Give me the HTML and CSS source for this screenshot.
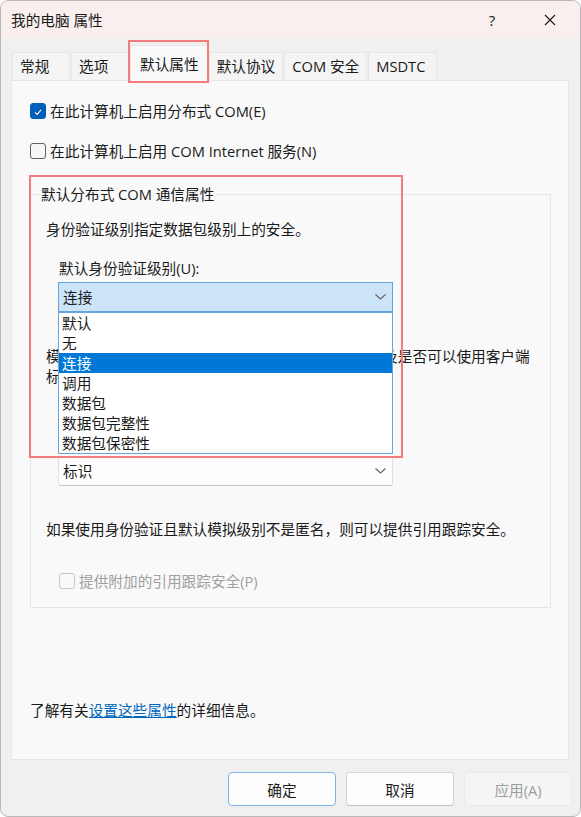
FILE: index.html
```html
<!DOCTYPE html>
<html lang="zh-CN">
  <head>
    <meta charset="UTF-8" />
    <title>我的电脑 属性</title>
    <link rel="stylesheet" href="styles.css">
  </head>
  <body>
    <div class="window">
      <div class="titlebar">
        <span class="title">我的电脑 属性</span>
        <span class="help">?</span>
        <span class="close">
          <svg width="12" height="12" viewBox="0 0 12 12"><path d="M1 1 L11 11 M11 1 L1 11" stroke="#1a1a1a" stroke-width="1.1" fill="none"/></svg>
        </span>
      </div>

      <!-- 选项卡 -->
      <div class="tabs">
        <div class="tab">常规</div>
        <div class="tab">选项</div>
        <div class="tab active">默认属性</div>
        <div class="tab">默认协议</div>
        <div class="tab">COM 安全</div>
        <div class="tab">MSDTC</div>
      </div>

      <div class="panel">
        <label class="check">
          <span class="box checked">
            <svg width="16" height="16" viewBox="0 0 16 16"><polyline points="4.5,8.5 7,10.8 11.5,5.5" stroke="#fff" stroke-width="1.3" fill="none"/></svg>
          </span>
          在此计算机上启用分布式 COM(E)
        </label>
        <label class="check">
          <span class="box"></span>
          在此计算机上启用 COM Internet 服务(N)
        </label>

        <fieldset class="group">
          <legend>默认分布式 COM 通信属性</legend>
          <div class="group-body">
            <p class="desc">身份验证级别指定数据包级别上的安全。</p>
            <div class="field">
              <div class="field-label">默认身份验证级别(U):</div>
              <div class="combo open">
                <span>连接</span>
                <svg width="11" height="6" viewBox="0 0 11 6"><polyline points="0.5,0.5 5.5,5 10.5,0.5" stroke="#5f5f5f" stroke-width="1.1" fill="none"/></svg>
                <!-- 展开的下拉列表 -->
                <ul class="droplist">
                  <li>默认</li>
                  <li>无</li>
                  <li class="selected">连接</li>
                  <li>调用</li>
                  <li>数据包</li>
                  <li>数据包完整性</li>
                  <li>数据包保密性</li>
                </ul>
              </div>
            </div>
            <p class="desc imp">模拟级别指定应用程序是否能够确定调用方身份，以及是否可以使用客户端标识执行操作。</p>
            <div class="field second">
              <div class="field-label">默认模拟级别(I):</div>
              <div class="combo">
                <span>标识</span>
                <svg width="11" height="6" viewBox="0 0 11 6"><polyline points="0.5,0.5 5.5,5 10.5,0.5" stroke="#5f5f5f" stroke-width="1.1" fill="none"/></svg>
              </div>
            </div>
            <p class="desc track">如果使用身份验证且默认模拟级别不是匿名，则可以提供引用跟踪安全。</p>
            <label class="check disabled">
              <span class="box"></span>
              提供附加的引用跟踪安全(P)
            </label>
          </div>
        </fieldset>

        <p class="more">了解有关<a href="#">设置这些属性</a>的详细信息。</p>
      </div>

      <div class="buttons">
        <button class="btn default">确定</button>
        <button class="btn">取消</button>
        <button class="btn" disabled>应用(A)</button>
      </div>

      <!-- 红色标注框 -->
      <div class="mark mark-tab"></div>
      <div class="mark mark-group"></div>
    </div>
  </body>
</html>
```

FILE: styles.css
```css
* {
  margin: 0;
  padding: 0;
  box-sizing: border-box;
}
body {
  background: #fff;
  font-family: "Open Sans", "Noto Sans CJK SC", sans-serif;
  font-size: 14.67px;
  color: #1a1a1a;
}
.window {
  position: relative;
  width: 581px;
  height: 817px;
  border: 1px solid #b9b9b9;
  border-radius: 8px;
  overflow: hidden;
  background: #f0f0f0;
  display: flex;
  flex-direction: column;
}
.titlebar {
  height: 37px;
  flex: none;
  background: #f8efee;
  display: flex;
  align-items: center;
  padding-left: 10px;
  line-height: 20px;
}
.title {
  flex: 1;
}
.help {
  width: 58px;
  text-align: center;
  font-size: 15px;
}
.close {
  width: 58px;
  height: 37px;
  display: flex;
  align-items: center;
  justify-content: center;
  margin-right: 1px;
}
/*
  选项卡
*/
.tabs {
  flex: none;
  height: 35px;
  margin-top: 7px;
  padding-left: 11px;
  display: flex;
  align-items: flex-end;
}
.tab {
  height: 28px;
  min-width: 58px;
  padding: 0 7px;
  line-height: 27px;
  background: #f4f4f4;
  border: 1px solid #e6e6e6;
  border-bottom: none;
  margin-right: 1px;
}
.tab.active {
  height: 36px;
  line-height: 36px;
  padding: 0 8px 0 9px;
  margin: 0 1px -1px 0;
  background: #f9f9f9;
  position: relative;
  z-index: 1;
}
.tab:last-child {
  padding-right: 11px;
}
.panel {
  flex: none;
  height: 680px;
  margin: 0 11px 0 10px;
  padding: 20px 17px 0 18px;
  background: #f9f9f9;
  border: 1px solid #e6e6e6;
}
/*
  复选框
*/
.check {
  display: flex;
  align-items: center;
  height: 20px;
  line-height: 20px;
  gap: 4px;
}
.check + .check {
  margin-top: 20px;
}
.box {
  width: 16px;
  height: 16px;
  border: 1px solid #616161;
  border-radius: 3px;
  background: #f6f6f6;
  display: flex;
}
.box.checked {
  border-color: #005fb8;
  background: #005fb8;
}
.check.disabled {
  color: #a0a0a0;
  margin-left: 13px;
  margin-top: 32px;
}
.check.disabled .box {
  border-color: #c8c8c8;
  background: #f9f9f9;
}
/*
  分组框
*/
.group {
  margin-top: 23px;
  border: 1px solid #e5e5e5;
  padding: 0;
  min-width: 0;
}
.group legend {
  margin-left: 8px;
  padding: 0 2px;
  line-height: 20px;
}
.group-body {
  padding: 15px 0 16px 15px;
}
.desc {
  line-height: 20px;
}
.field {
  margin-top: 19px;
  margin-left: 12px;
  width: 335px;
}
.field-label {
  line-height: 20px;
  margin-left: 1px;
}
.combo {
  position: relative;
  margin-top: 4px;
  height: 30px;
  border: 1px solid #e0e0e0;
  border-bottom-color: #c4c4c4;
  border-radius: 3px;
  background: #fdfdfd;
  display: flex;
  align-items: center;
  justify-content: space-between;
  padding: 0 6px 0 4px;
  line-height: 20px;
}
.combo.open {
  background: #cce4f7;
  border-color: #67a3db;
  border-radius: 0;
}
.droplist {
  position: absolute;
  left: -1px;
  right: -1px;
  top: 29px;
  z-index: 2;
  list-style: none;
  background: #fff;
  border: 1px solid #6aa6de;
}
.droplist li {
  height: 20px;
  line-height: 20px;
  padding-left: 3px;
}
.droplist .selected {
  background: #0078d7;
  color: #fff;
}
.imp {
  margin-top: 34px;
  width: 490px;
}
.field.second {
  margin-top: 46px;
}
.track {
  margin-top: 33px;
}
.more {
  margin-top: 92px;
  line-height: 20px;
}
.more a {
  color: #0067c0;
}
/*
  底部按钮
*/
.buttons {
  flex: none;
  margin-top: 12px;
  padding-right: 8px;
  display: flex;
  justify-content: flex-end;
  gap: 10px;
}
.btn {
  width: 108px;
  height: 34px;
  font-family: inherit;
  font-size: 14.67px;
  color: #1a1a1a;
  background: #fdfdfd;
  border: 1px solid #d6d6d6;
  border-bottom-color: #c2c2c2;
  border-radius: 4px;
}
.btn.default {
  border-color: #7eb4ea;
}
.btn:disabled {
  background: #f5f5f5;
  border-color: #ebebeb;
  color: #9d9d9d;
}
/*
  红色标注框
*/
.mark {
  position: absolute;
  border: 2px solid #f47c7c;
  z-index: 5;
}
.mark-tab {
  left: 127px;
  top: 39px;
  width: 81px;
  height: 43px;
}
.mark-group {
  left: 28px;
  top: 174px;
  width: 374px;
  height: 283px;
}
```
